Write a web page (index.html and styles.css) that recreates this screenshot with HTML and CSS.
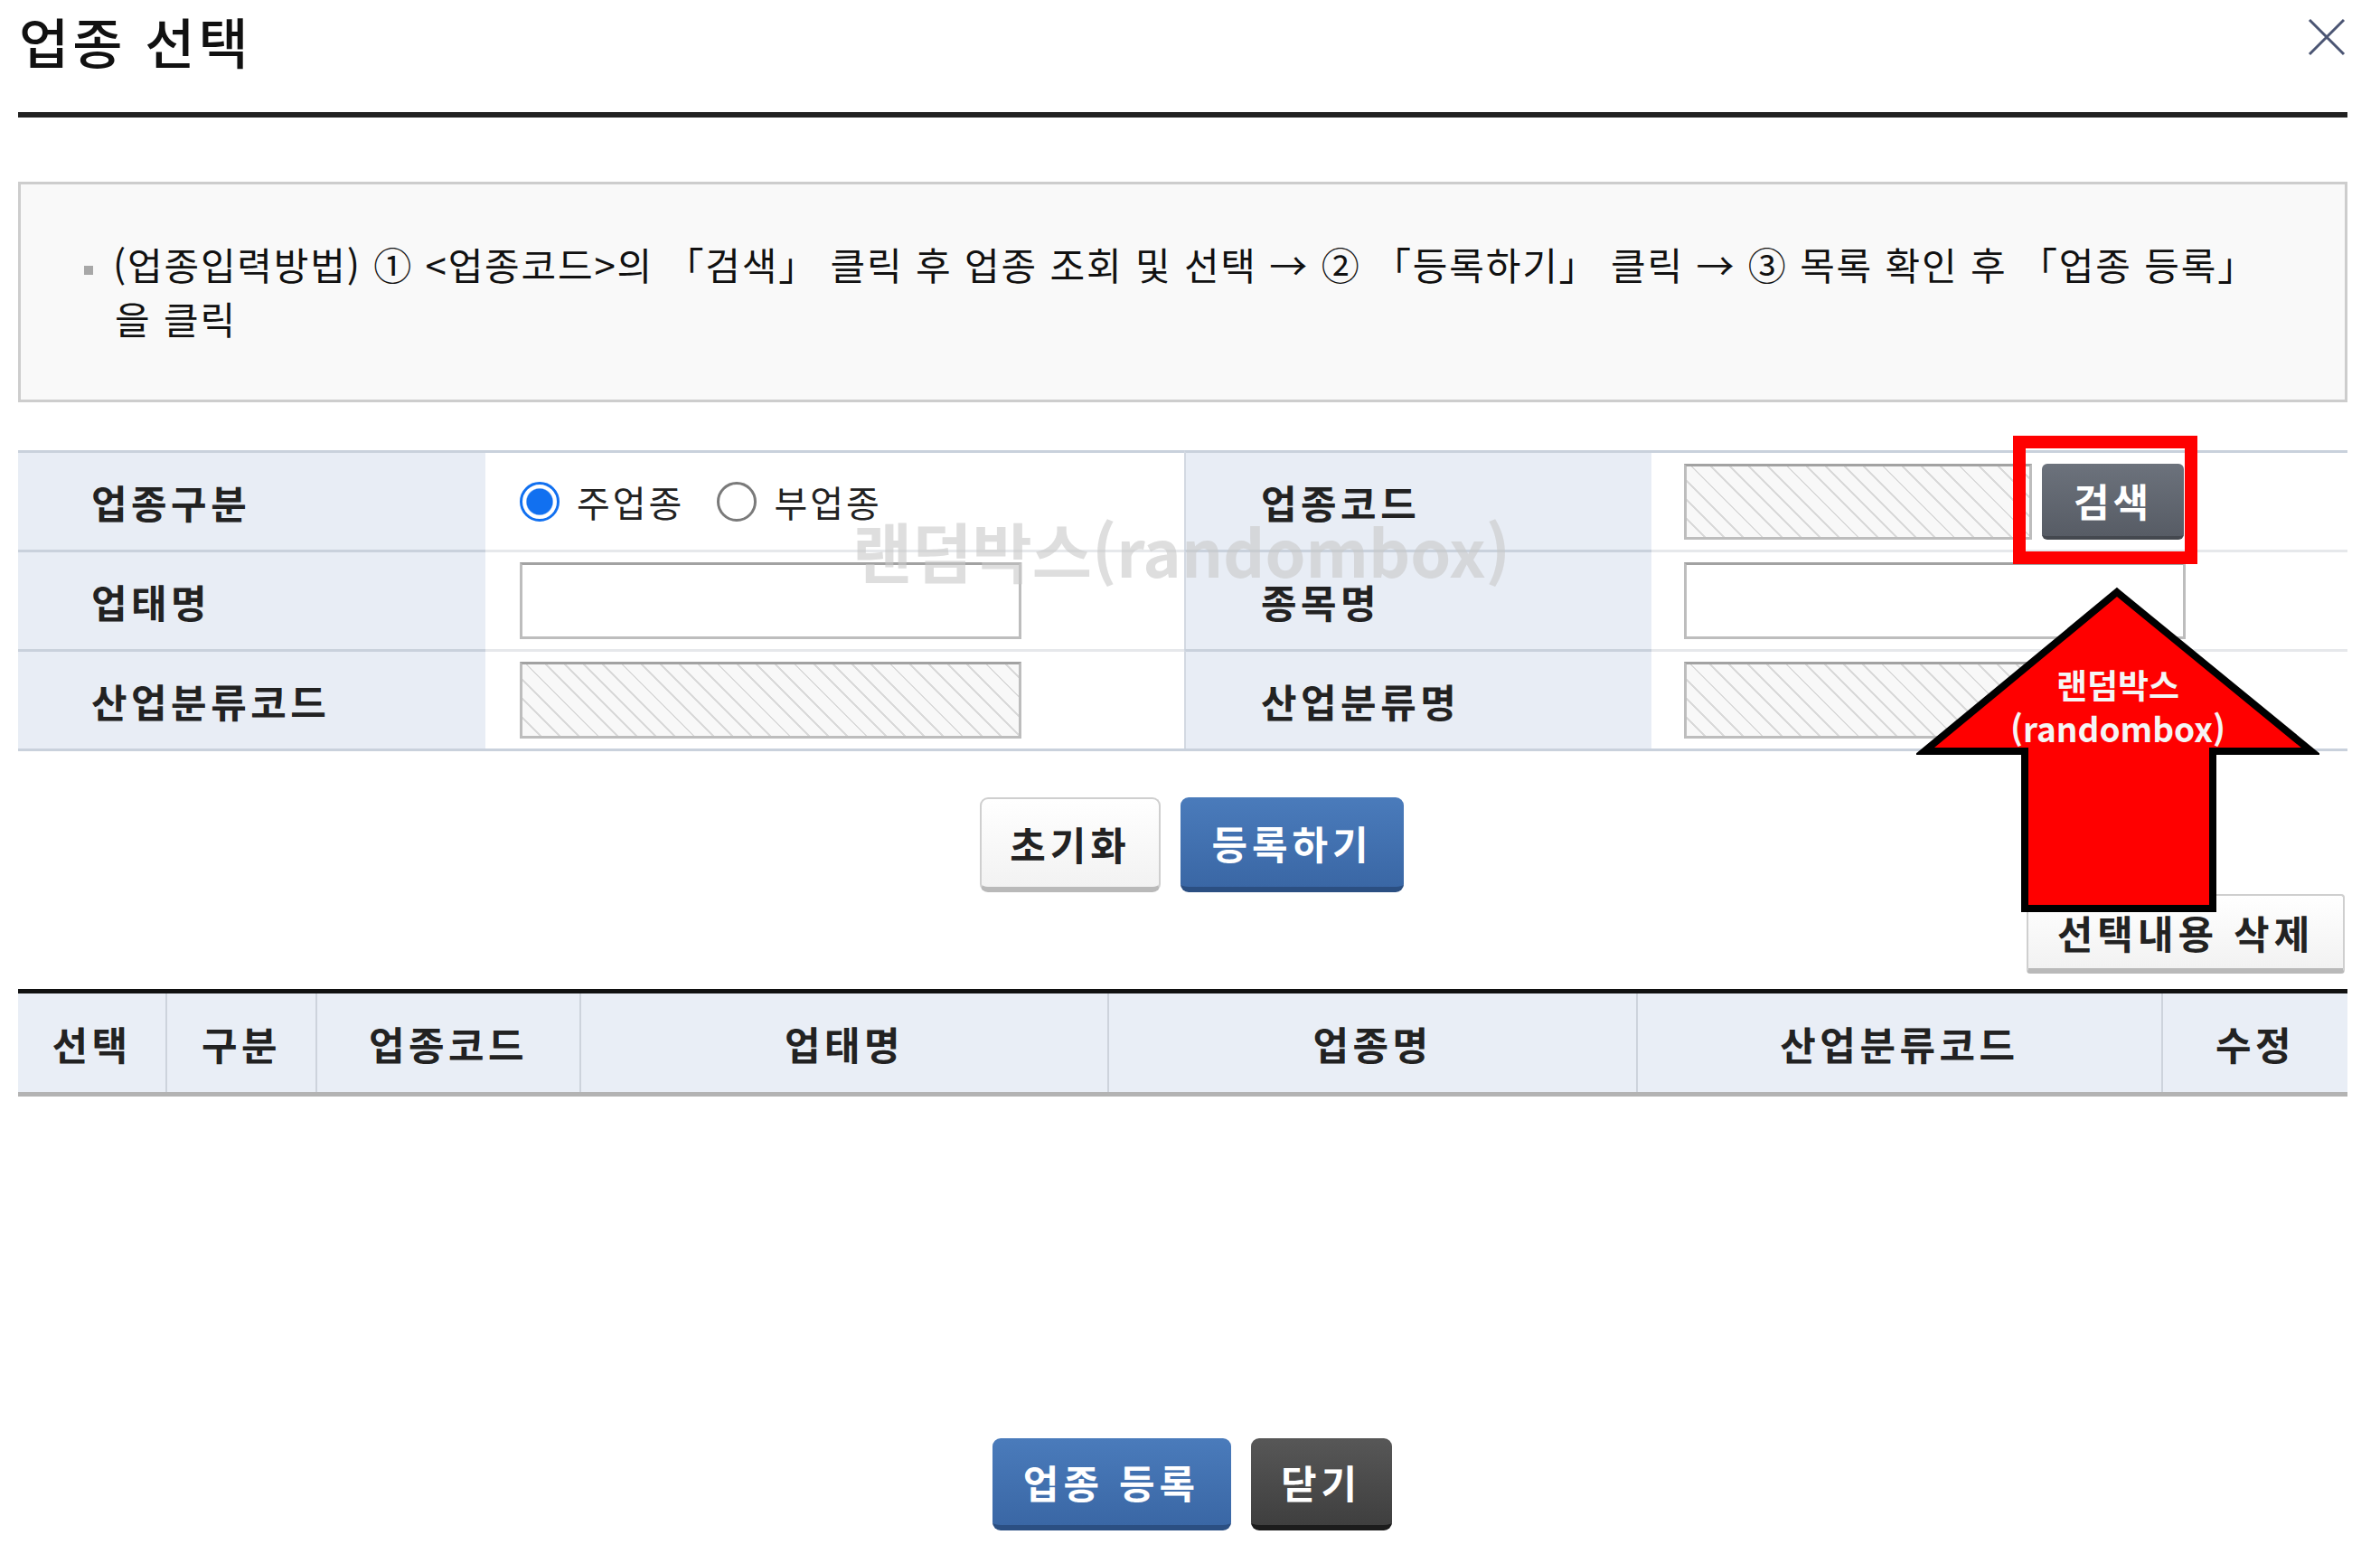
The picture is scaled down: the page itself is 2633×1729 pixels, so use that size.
FILE: index.html
```html
<!DOCTYPE html>
<html lang="ko">

<head>
    <meta charset="UTF-8">
    <meta name="viewport" content="width=device-width, initial-scale=1.0">
    <title>업종 선택</title>
    <link rel="stylesheet" href="styles.css">
</head>

<body>
    <div class="popup">
        <div class="pop-head">
            <h2 class="pop-title">업종 선택</h2>
            <button class="btn-close" title="닫기">
                <svg width="42" height="42" viewBox="0 0 42 42">
                    <path d="M2 2 L40 40 M40 2 L2 40" stroke="#4b5573" stroke-width="3" fill="none" />
                </svg>
            </button>
        </div>

        <div class="guide-box">
            <p class="guide">(업종입력방법) ① &lt;업종코드&gt;의 「검색」 클릭 후 업종 조회 및 선택 → ② 「등록하기」 클릭 → ③ 목록 확인 후 「업종 등록」을 클릭</p>
        </div>

        <div class="form-grid">
            <div class="f-label">업종구분</div>
            <div class="f-val">
                <label class="rdo"><input type="radio" name="kind" checked> 주업종</label>
                <label class="rdo"><input type="radio" name="kind"> 부업종</label>
            </div>
            <div class="f-label f-label2">업종코드</div>
            <div class="f-val">
                <input type="text" class="inp inp-dis inp-code" disabled>
                <button class="btn btn-search">검색</button>
            </div>

            <div class="f-label">업태명</div>
            <div class="f-val"><input type="text" class="inp"></div>
            <div class="f-label f-label2">종목명</div>
            <div class="f-val"><input type="text" class="inp"></div>

            <div class="f-label">산업분류코드</div>
            <div class="f-val"><input type="text" class="inp inp-dis" disabled></div>
            <div class="f-label f-label2">산업분류명</div>
            <div class="f-val"><input type="text" class="inp inp-dis" disabled></div>
        </div>

        <div class="btn-area">
            <button class="btn btn-white btn-reset">초기화</button>
            <button class="btn btn-blue btn-add">등록하기</button>
        </div>

        <div class="grid-top">
            <button class="btn btn-white btn-del">선택내용 삭제</button>
        </div>

        <div class="grid-head">
            <div>선택</div>
            <div>구분</div>
            <div>업종코드</div>
            <div>업태명</div>
            <div>업종명</div>
            <div>산업분류코드</div>
            <div>수정</div>
        </div>
        <div class="grid-body"></div>

        <div class="btn-bottom">
            <button class="btn btn-blue btn-reg">업종 등록</button>
            <button class="btn btn-dark btn-cls">닫기</button>
        </div>

        <!-- overlays -->
        <div class="watermark">랜덤박스(randombox)</div>
        <div class="mark-box"></div>
        <div class="mark-arrow">
            <svg width="446" height="372" viewBox="0 0 446 372">
                <polygon points="222,10 437,186 328,186 328,360 120,360 120,186 9,186" fill="#ff0000" stroke="#000" stroke-width="8" stroke-linejoin="miter" />
            </svg>
            <div class="arrow-label">랜덤박스<br>(randombox)</div>
        </div>
    </div>
</body>

</html>
```

FILE: styles.css
```css
* {
    margin: 0;
    padding: 0;
    box-sizing: border-box;
}

body {
    font-family: "Noto Sans CJK KR", "Noto Sans", sans-serif;
    color: #222;
    background: #fff;
}

.popup {
    position: relative;
    width: 2577px;
    height: 1729px;
    margin-left: 20px;
}

/* header */
.pop-head {
    display: flex;
    justify-content: space-between;
    height: 130px;
    border-bottom: 6px solid #222;
}

.pop-title {
    font-size: 60px;
    font-weight: 500;
    letter-spacing: 4px;
    line-height: 90px;
    color: #111;
    margin-left: 1px;
}

.btn-close {
    width: 42px;
    height: 42px;
    margin-top: 20px;
    margin-right: 2px;
    background: none;
    border: 0;
}

/* guide */
.guide-box {
    margin-top: 71px;
    height: 244px;
    border: 3px solid #cdcdcd;
    background: #f9f9f9;
    padding: 58px 70px 0 104px;
}

.guide {
    font-size: 42px;
    letter-spacing: 1.8px;
    line-height: 60px;
    color: #111;
}

.guide::before {
    content: "";
    display: inline-block;
    width: 10px;
    height: 10px;
    background: #a8a8a8;
    margin-left: -34px;
    margin-right: 22px;
    vertical-align: middle;
}

/* form */
.form-grid {
    display: grid;
    grid-template-columns: 517px 773px 517px 770px;
    margin-top: 53px;
    border-bottom: 3px solid #c9d1dc;
}

.f-label,
.f-val {
    height: 110px;
    display: flex;
    align-items: center;
    border-top: 3px solid #c9d1dc;
}

.f-label {
    background: #e8edf5;
    padding-left: 81px;
    font-size: 43px;
    font-weight: 700;
    letter-spacing: 4.5px;
    color: #222;
}

.f-label2 {
    border-left: 2px solid #d3d9e2;
    padding-left: 83px;
}

.f-val {
    background: #fff;
    padding-left: 38px;
    border-top-color: #e6e8eb;
}

.form-grid > :nth-child(-n+4) {
    border-top-color: #c9d1dc;
}

.f-label2 + .f-val {
    padding-left: 36px;
}

.rdo {
    display: flex;
    align-items: center;
    font-size: 40px;
    letter-spacing: 3px;
    color: #222;
    margin-right: 36px;
}

.rdo input {
    appearance: none;
    width: 44px;
    height: 44px;
    margin-right: 19px;
    border: 3px solid #7a7a7a;
    border-radius: 50%;
    background: #fff;
}

.rdo input:checked {
    border-color: #1170f0;
    background: radial-gradient(circle, #1170f0 0 52%, #fff 57%);
}

.inp {
    width: 555px;
    height: 85px;
    border: 3px solid #bdbdbd;
    border-top-color: #a2a2a2;
    background: #fff;
}

.inp-dis {
    background: repeating-linear-gradient(45deg, #f8f8f8 0 13px, #d9d9d9 13px 15px);
}

.inp-code {
    width: 385px;
    height: 84px;
    margin-right: 11px;
}

/* buttons */
.btn {
    font-family: inherit;
    font-size: 43px;
    font-weight: 700;
    letter-spacing: 5px;
    border-radius: 9px;
    cursor: pointer;
}

.btn-white {
    color: #222;
    background: linear-gradient(#ffffff, #f2f2f2);
    border: 2px solid #cfcfcf;
    border-bottom: 6px solid #b9b9b9;
}

.btn-blue {
    color: #fff;
    background: linear-gradient(#4a7bbb, #3a67a5);
    border: 0;
    border-bottom: 6px solid #2b4f82;
}

.btn-dark {
    color: #fff;
    background: linear-gradient(#575757, #3f3f3f);
    border: 0;
    border-bottom: 6px solid #1c1c1c;
}

.btn-search {
    width: 157px;
    height: 84px;
    border-radius: 6px;
    letter-spacing: 4px;
    color: #fff;
    border: 0;
    border-bottom: 4px solid #44484f;
    background: linear-gradient(#6c727c, #575c65);
}

.btn-area {
    display: flex;
    justify-content: center;
    gap: 22px;
    margin-top: 51px;
    padding-left: 20px;
}

.btn-reset {
    width: 200px;
    height: 105px;
}

.btn-add {
    width: 247px;
    height: 105px;
}

.grid-top {
    display: flex;
    justify-content: flex-end;
    margin-top: 2px;
    padding-right: 3px;
}

.btn-del {
    width: 352px;
    height: 88px;
    border-radius: 4px;
}

/* grid */
.grid-head {
    display: grid;
    grid-template-columns: 163px 166px 292px 584px 585px 581px 206px;
    margin-top: 17px;
    border-top: 5px solid #111;
    border-bottom: 5px solid #b3b3b3;
    background: #e9eef6;
}

.grid-head div {
    height: 109px;
    display: flex;
    align-items: center;
    justify-content: center;
    font-size: 43px;
    font-weight: 700;
    letter-spacing: 4.5px;
    color: #222;
}

.grid-head div + div {
    border-left: 2px solid #cdd3dc;
}

.grid-body {
    height: 378px;
}

.btn-bottom {
    display: flex;
    justify-content: center;
    gap: 22px;
    padding-left: 20px;
}

.btn-reg {
    width: 264px;
    height: 102px;
}

.btn-cls {
    width: 156px;
    height: 102px;
}

/* overlays */
.watermark {
    position: absolute;
    left: 923px;
    top: 572px;
    font-size: 72px;
    line-height: 72px;
    font-weight: 700;
    color: rgba(200, 200, 200, 0.6);
    white-space: nowrap;
}

.mark-box {
    position: absolute;
    left: 2207px;
    top: 482px;
    width: 204px;
    height: 142px;
    border: 14px solid #ff0000;
}

.mark-arrow {
    position: absolute;
    left: 2100px;
    top: 645px;
    width: 446px;
    height: 372px;
}

.arrow-label {
    position: absolute;
    left: 0;
    top: 88px;
    width: 446px;
    text-align: center;
    color: #f5f5f5;
    font-size: 37px;
    font-weight: 700;
    line-height: 48px;
}
```
